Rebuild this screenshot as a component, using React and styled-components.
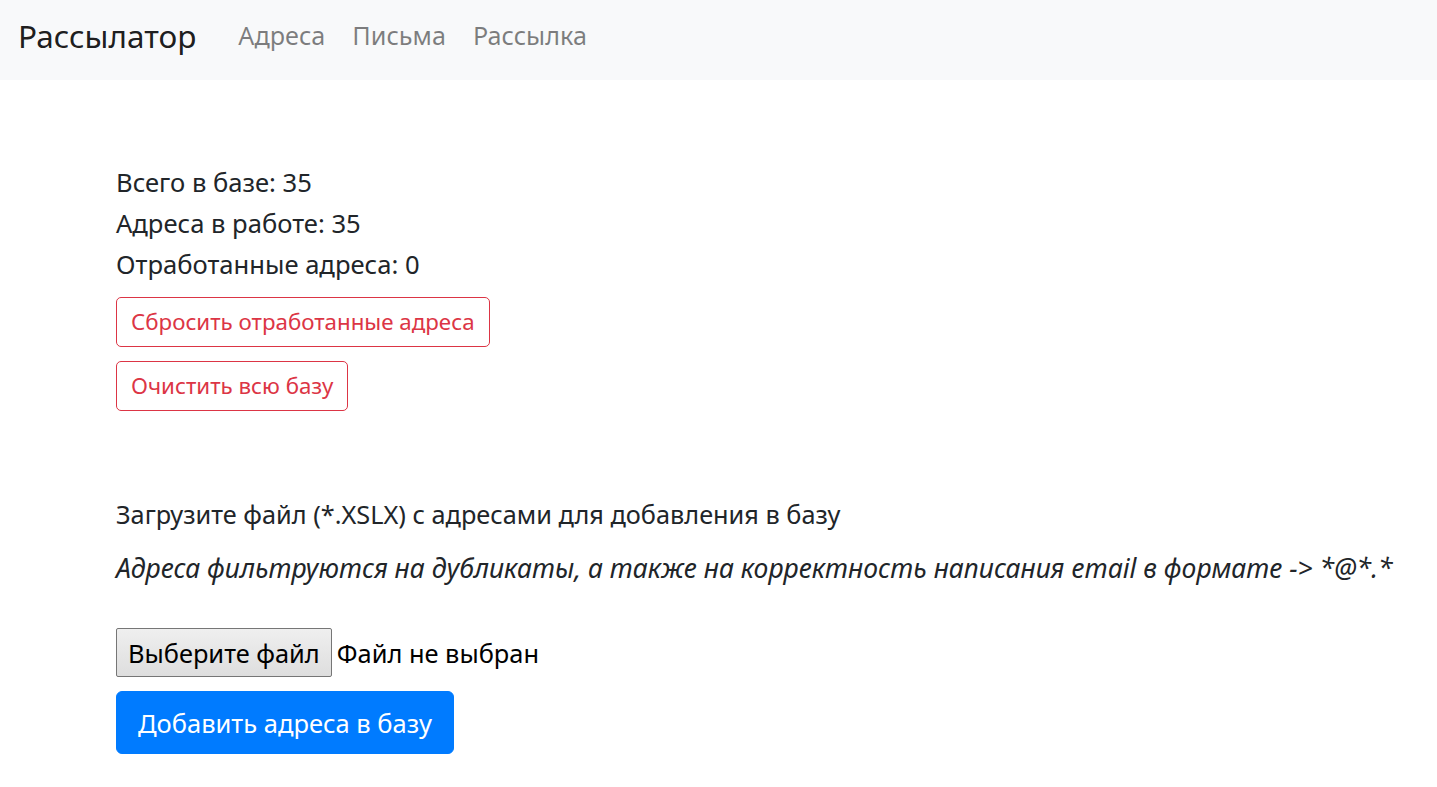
import React from "react";
import styled, { createGlobalStyle } from "styled-components";

const Global = createGlobalStyle`
  html, body { margin: 0; padding: 0; background: #fff; }
  body { font-family: "Noto Sans", "Open Sans", sans-serif; color: #212529; }
  * { box-sizing: border-box; }
`;

const Navbar = styled.nav`
  display: flex;
  align-items: center;
  height: 80px;
  padding: 0 18px;
  background: #f8f9fa;
`;

const Brand = styled.a`
  font-size: 31.5px;
  color: rgba(0, 0, 0, 0.9);
  text-decoration: none;
  margin-right: 42px;
  margin-top: -10px;
`;

const NavList = styled.div`
  display: flex;
  gap: 27px;
  margin-top: -10px;
`;

const NavLink = styled.a`
  font-size: 25.2px;
  color: rgba(0, 0, 0, 0.5);
  text-decoration: none;
`;

const Main = styled.main`
  padding: 87px 0 0 116px;
`;

const Stat = styled.div`
  font-size: 25.6px;
  line-height: 31px;
  margin-bottom: 10px;
`;

const ButtonStack = styled.div`
  display: flex;
  flex-direction: column;
  align-items: flex-start;
  gap: 14px;
  margin-top: 17px;
`;

const OutlineButton = styled.button`
  font-family: inherit;
  font-size: 22.3px;
  line-height: 30px;
  height: 50px;
  padding: 0 14px;
  color: #dc3545;
  background: transparent;
  border: 1px solid #dc3545;
  border-radius: 5px;
`;

const Section = styled.section`
  margin-top: 88px;
`;

const Info = styled.p`
  margin: 0 0 23px;
  font-size: ${(p) => (p.$italic ? "26.5px" : "25.3px")};
  line-height: 31px;
  font-style: ${(p) => (p.$italic ? "italic" : "normal")};
`;

const FileRow = styled.div`
  display: flex;
  align-items: center;
  margin-top: 44px;
  font-size: 25.4px;
`;

const FileButton = styled.span`
  display: inline-flex;
  align-items: center;
  height: 49px;
  padding: 0 11px;
  color: #000;
  background: linear-gradient(#efefef, #dedede);
  border: 1px solid #767676;
  border-radius: 2px;
  margin-right: 5px;
`;

const FileText = styled.span`
  color: #000;
`;

const PrimaryButton = styled.button`
  display: block;
  margin-top: 14px;
  font-family: inherit;
  font-size: 25.5px;
  height: 63px;
  padding: 0 21px;
  color: #fff;
  background: #007bff;
  border: 1px solid #007bff;
  border-radius: 6px;
`;

export default function App() {
  return (
    <>
      <Global />
      <Navbar>
        <Brand href="#">Рассылатор</Brand>
        <NavList>
          <NavLink href="#">Адреса</NavLink>
          <NavLink href="#">Письма</NavLink>
          <NavLink href="#">Рассылка</NavLink>
        </NavList>
      </Navbar>
      <Main>
        <Stat>Всего в базе: 35</Stat>
        <Stat>Адреса в работе: 35</Stat>
        <Stat>Отработанные адреса: 0</Stat>
        <ButtonStack>
          <OutlineButton>Сбросить отработанные адреса</OutlineButton>
          <OutlineButton>Очистить всю базу</OutlineButton>
        </ButtonStack>
        <Section>
          <Info>Загрузите файл (*.XSLX) с адресами для добавления в базу</Info>
          <Info $italic>
            Адреса фильтруются на дубликаты, а также на корректность написания email в формате -&gt; *@*.*
          </Info>
          <FileRow>
            <FileButton>Выберите файл</FileButton>
            <FileText>Файл не выбран</FileText>
          </FileRow>
          <PrimaryButton>Добавить адреса в базу</PrimaryButton>
        </Section>
      </Main>
    </>
  );
}
